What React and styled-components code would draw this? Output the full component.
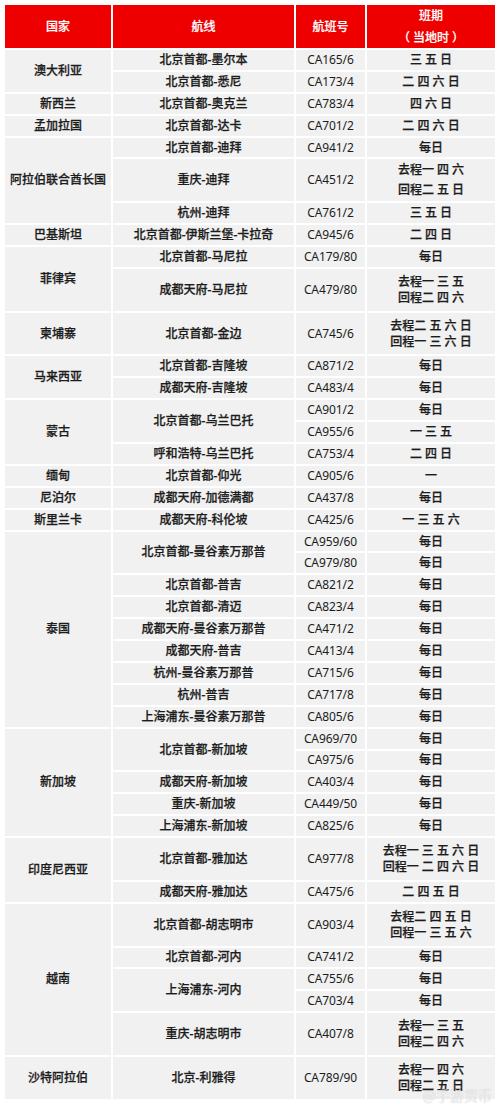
import React from 'react';
import styled, { createGlobalStyle } from 'styled-components';

const GlobalStyle = createGlobalStyle`
    body {
        margin: 0;
        background: #fff;
        font-family: "Noto Sans", "Noto Sans CJK SC", sans-serif;
    }
`;

const Page = styled.div`
    position: relative;
    padding: 5px 5px 0;
    width: 500px;
    height: 1107px;
    box-sizing: border-box;
    overflow: hidden;
`;

const Table = styled.div`
    display: grid;
    grid-template-columns: 106px 181px 69px 128px;
    grid-template-rows: 43px;
    grid-auto-rows: 19.9px;
    gap: 2px;
`;

const HeadCell = styled.div`
    background: #ee0000;
    color: #fff;
    font-size: 12px;
    font-weight: 500;
    -webkit-text-stroke: 0.2px #fff;
    display: flex;
    flex-direction: column;
    align-items: center;
    justify-content: center;
    gap: 8px;
    line-height: 14px;
`;

const Cell = styled.div`
    grid-column: ${(p) => p.$col};
    grid-row: span ${(p) => p.$span};
    background: #f1f1f1;
    color: #1c1c1c;
    font-size: 12px;
    font-weight: 500;
    -webkit-text-stroke: 0.25px #1c1c1c;
    display: flex;
    flex-direction: column;
    align-items: center;
    justify-content: center;
    text-align: center;
    line-height: ${(p) => (p.$loose ? '20px' : '16px')};
    white-space: pre;
`;

const FlightNo = styled(Cell)`
    font-weight: 400;
    -webkit-text-stroke: 0;
    letter-spacing: -0.1px;
`;

const Watermark = styled.div`
    position: absolute;
    right: 8px;
    bottom: 2px;
    font-size: 14px;
    color: rgba(255, 255, 255, 0.7);
    text-shadow: 0 0 1px rgba(120, 120, 120, 0.45);
    font-family: "Noto Sans CJK SC", sans-serif;
`;

const f = (no, days, span = 1, loose = false) => ({ no, days, span, loose });

const groups = [
    { country: '澳大利亚', routes: [
        { name: '北京首都-墨尔本', flights: [f('CA165/6', '三 五 日')] },
        { name: '北京首都-悉尼', flights: [f('CA173/4', '二 四 六 日')] },
    ] },
    { country: '新西兰', routes: [
        { name: '北京首都-奥克兰', flights: [f('CA783/4', '四 六 日')] },
    ] },
    { country: '孟加拉国', routes: [
        { name: '北京首都-达卡', flights: [f('CA701/2', '二 四 六 日')] },
    ] },
    { country: '阿拉伯联合酋长国', routes: [
        { name: '北京首都-迪拜', flights: [f('CA941/2', '每日')] },
        { name: '重庆-迪拜', flights: [f('CA451/2', ['去程一 四 六', '回程二 五 日'], 2, true)] },
        { name: '杭州-迪拜', flights: [f('CA761/2', '三 五 日')] },
    ] },
    { country: '巴基斯坦', routes: [
        { name: '北京首都-伊斯兰堡-卡拉奇', flights: [f('CA945/6', '二 四 日')] },
    ] },
    { country: '菲律宾', routes: [
        { name: '北京首都-马尼拉', flights: [f('CA179/80', '每日')] },
        { name: '成都天府-马尼拉', flights: [f('CA479/80', ['去程一 三 五', '回程二 四 六'], 2)] },
    ] },
    { country: '柬埔寨', routes: [
        { name: '北京首都-金边', flights: [f('CA745/6', ['去程二 五 六 日', '回程一 三 六 日'], 2)] },
    ] },
    { country: '马来西亚', routes: [
        { name: '北京首都-吉隆坡', flights: [f('CA871/2', '每日')] },
        { name: '成都天府-吉隆坡', flights: [f('CA483/4', '每日')] },
    ] },
    { country: '蒙古', routes: [
        { name: '北京首都-乌兰巴托', flights: [f('CA901/2', '每日'), f('CA955/6', '一 三 五')] },
        { name: '呼和浩特-乌兰巴托', flights: [f('CA753/4', '二 四 日')] },
    ] },
    { country: '缅甸', routes: [
        { name: '北京首都-仰光', flights: [f('CA905/6', '一')] },
    ] },
    { country: '尼泊尔', routes: [
        { name: '成都天府-加德满都', flights: [f('CA437/8', '每日')] },
    ] },
    { country: '斯里兰卡', routes: [
        { name: '成都天府-科伦坡', flights: [f('CA425/6', '一 三 五 六')] },
    ] },
    { country: '泰国', routes: [
        { name: '北京首都-曼谷素万那普', flights: [f('CA959/60', '每日'), f('CA979/80', '每日')] },
        { name: '北京首都-普吉', flights: [f('CA821/2', '每日')] },
        { name: '北京首都-清迈', flights: [f('CA823/4', '每日')] },
        { name: '成都天府-曼谷素万那普', flights: [f('CA471/2', '每日')] },
        { name: '成都天府-普吉', flights: [f('CA413/4', '每日')] },
        { name: '杭州-曼谷素万那普', flights: [f('CA715/6', '每日')] },
        { name: '杭州-普吉', flights: [f('CA717/8', '每日')] },
        { name: '上海浦东-曼谷素万那普', flights: [f('CA805/6', '每日')] },
    ] },
    { country: '新加坡', routes: [
        { name: '北京首都-新加坡', flights: [f('CA969/70', '每日'), f('CA975/6', '每日')] },
        { name: '成都天府-新加坡', flights: [f('CA403/4', '每日')] },
        { name: '重庆-新加坡', flights: [f('CA449/50', '每日')] },
        { name: '上海浦东-新加坡', flights: [f('CA825/6', '每日')] },
    ] },
    { country: '印度尼西亚', routes: [
        { name: '北京首都-雅加达', flights: [f('CA977/8', ['去程一 三 五 六 日', '回程一 二 四 六 日'], 2)] },
        { name: '成都天府-雅加达', flights: [f('CA475/6', '二 四 五 日')] },
    ] },
    { country: '越南', routes: [
        { name: '北京首都-胡志明市', flights: [f('CA903/4', ['去程二 四 五 日', '回程一 三 五 六'], 2)] },
        { name: '北京首都-河内', flights: [f('CA741/2', '每日')] },
        { name: '上海浦东-河内', flights: [f('CA755/6', '每日'), f('CA703/4', '每日')] },
        { name: '重庆-胡志明市', flights: [f('CA407/8', ['去程一 三 五', '回程二 四 六'], 2)] },
    ] },
    { country: '沙特阿拉伯', routes: [
        { name: '北京-利雅得', flights: [f('CA789/90', ['去程一 四 六', '回程二 五 日'], 2)] },
    ] },
];

const sum = (list, get) => list.reduce((n, x) => n + get(x), 0);
const routeSpan = (r) => sum(r.flights, (x) => x.span);

const Lines = ({ text }) =>
    Array.isArray(text) ? text.map((t) => <span key={t}>{t}</span>) : text;

function App() {
    return (
        <Page>
            <GlobalStyle />
            <Table>
                <HeadCell>国家</HeadCell>
                <HeadCell>航线</HeadCell>
                <HeadCell>航班号</HeadCell>
                <HeadCell>
                    <span>班期</span>
                    <span>（ 当地时 ）</span>
                </HeadCell>
                {groups.map((g) => (
                    <React.Fragment key={g.country}>
                        <Cell $col={1} $span={sum(g.routes, routeSpan)}>{g.country}</Cell>
                        {g.routes.map((r) => (
                            <React.Fragment key={r.name}>
                                <Cell $col={2} $span={routeSpan(r)}>{r.name}</Cell>
                                {r.flights.map((fl) => (
                                    <React.Fragment key={fl.no}>
                                        <FlightNo $col={3} $span={fl.span}>{fl.no}</FlightNo>
                                        <Cell $col={4} $span={fl.span} $loose={fl.loose}>
                                            <Lines text={fl.days} />
                                        </Cell>
                                    </React.Fragment>
                                ))}
                            </React.Fragment>
                        ))}
                    </React.Fragment>
                ))}
            </Table>
            <Watermark>@手游货币</Watermark>
        </Page>
    );
}

export default App;
